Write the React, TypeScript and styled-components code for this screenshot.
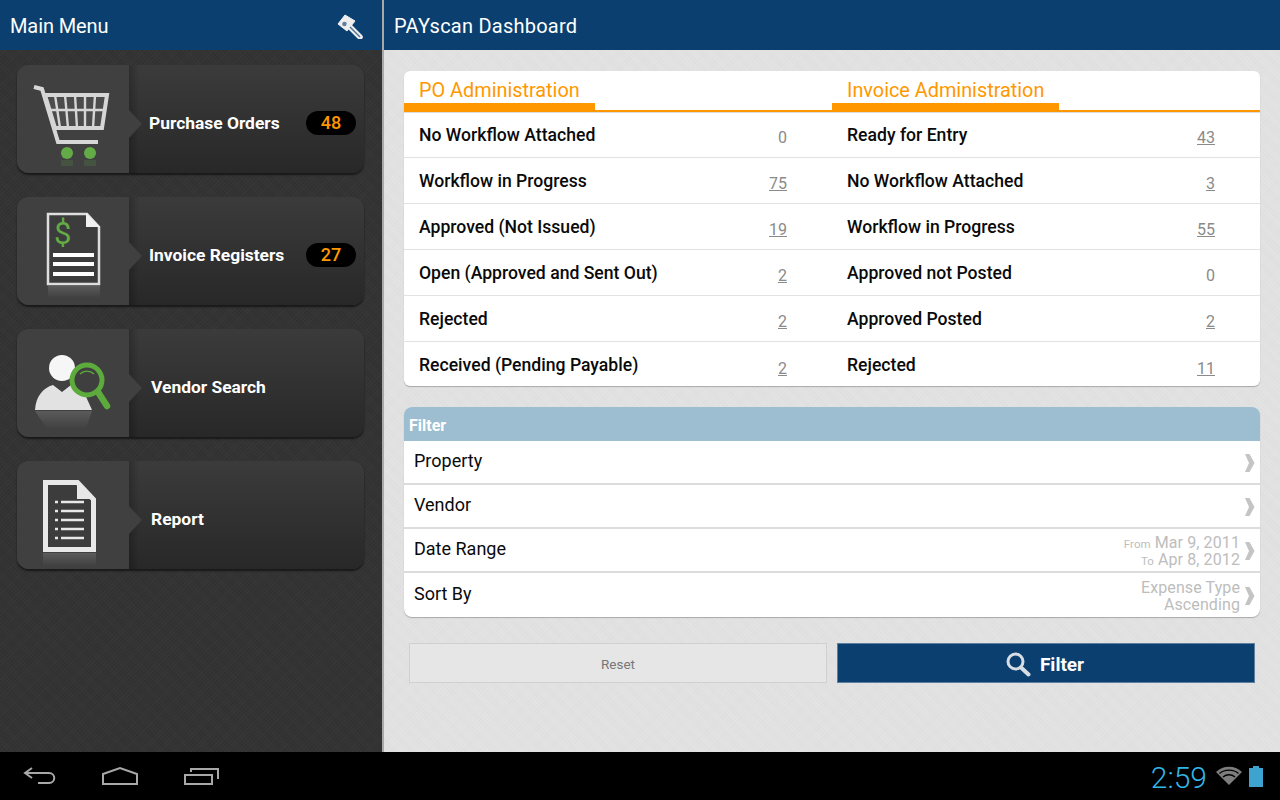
import React, { FC, ReactNode } from 'react';
import styled, { createGlobalStyle } from 'styled-components';

const GlobalStyle = createGlobalStyle`
    html, body {
        margin: 0;
        padding: 0;
        background: #000;
    }
    body {
        font-family: Roboto, "Liberation Sans", sans-serif;
    }
`;

const Screen = styled.div`
    width: 1280px;
    height: 800px;
    overflow: hidden;
    display: flex;
    flex-direction: column;
`;

const Panes = styled.div`
    height: 752px;
    display: flex;
`;

const TopBar = styled.div`
    height: 50px;
    flex: none;
    background: #0b3f70;
    color: #fff;
    font-size: 20px;
    display: flex;
    align-items: center;
    justify-content: space-between;
    box-sizing: border-box;
    padding: 2px 19px 0 10px;
`;

const PageTitle = styled.span<{ $spacing: number }>`
    letter-spacing: ${(props) => props.$spacing}px;
`;

const Sidebar = styled.aside`
    width: 382px;
    flex: none;
    display: flex;
    flex-direction: column;
    background-color: #343434;
    background-image: repeating-linear-gradient(45deg, rgba(0, 0, 0, 0.07) 0 1px, transparent 1px 2px),
        repeating-linear-gradient(-45deg, rgba(255, 255, 255, 0.02) 0 1px, transparent 1px 3px);
`;

const Divider = styled.div`
    width: 2px;
    flex: none;
    background: #a9a9a9;
`;

const Menu = styled.nav`
    display: flex;
    flex-direction: column;
    gap: 24px;
    padding: 15px 18px 0 17px;
`;

const MenuCard = styled.div`
    height: 108px;
    display: flex;
    border-radius: 12px;
    overflow: hidden;
    background: linear-gradient(#3b3b3b, #282828);
    box-shadow: 0 2px 2px rgba(0, 0, 0, 0.55);
`;

const CardIcon = styled.div`
    position: relative;
    width: 112px;
    flex: none;
    display: flex;
    background: #404040;

    &::after {
        content: '';
        position: absolute;
        left: 100%;
        top: 45px;
        border-style: solid;
        border-width: 14px 0 14px 13px;
        border-color: transparent transparent transparent #404040;
    }
`;

const CardBody = styled.div<{ $inset: number }>`
    flex: 1;
    display: flex;
    align-items: center;
    justify-content: space-between;
    padding: 7px 8px 0 ${(props) => props.$inset}px;
    background: linear-gradient(90deg, rgba(0, 0, 0, 0.22), transparent 10px);
`;

const CardLabel = styled.span`
    color: #fff;
    font-size: 17.4px;
    font-weight: 700;
`;

const Badge = styled.span`
    width: 50px;
    height: 24px;
    border-radius: 12px;
    background: #000;
    color: #ff9800;
    font-size: 18px;
    font-weight: 500;
    display: flex;
    align-items: center;
    justify-content: center;
`;

const Main = styled.main`
    flex: 1;
    display: flex;
    flex-direction: column;
    background-color: #e0e0e0;
    background-image: repeating-linear-gradient(45deg, rgba(255, 255, 255, 0.12) 0 1px, transparent 1px 2px),
        repeating-linear-gradient(-45deg, rgba(0, 0, 0, 0.012) 0 1px, transparent 1px 3px);
`;

const Content = styled.div`
    padding: 21px 20px 0;
    display: flex;
    flex-direction: column;
`;

const AdminPanel = styled.section`
    height: 315px;
    display: grid;
    grid-template-columns: 428px 428px;
    background: #fff;
    border-radius: 6px;
    box-shadow: 0 1px 1px rgba(0, 0, 0, 0.25);
    overflow: hidden;
`;

const AdminColumn = styled.div`
    display: flex;
    flex-direction: column;
`;

const AdminHeader = styled.div`
    height: 41px;
    flex: none;
    box-sizing: border-box;
    border-bottom: 2px solid #ff9800;
    box-shadow: 0 1px 0 #ddd;
    display: flex;
    align-items: flex-end;
`;

const AdminTab = styled.h2<{ $width: number }>`
    margin: 0 0 -2px;
    width: ${(props) => props.$width}px;
    height: 41px;
    box-sizing: border-box;
    padding: 8px 0 0 15px;
    border-bottom: 9px solid #ff9800;
    color: #ff9800;
    font-size: 19.85px;
    line-height: 24px;
    font-weight: 400;
`;

const AdminRow = styled.div`
    height: 46px;
    box-sizing: border-box;
    display: flex;
    align-items: center;
    justify-content: space-between;
    padding: 0 45px 0 15px;
    border-bottom: 1px solid #e2e2e2;
    color: #0a0a0a;
    font-size: 17.6px;
    font-weight: 500;

    &:last-child {
        border-bottom: 0;
    }
`;

const Count = styled.span<{ $linked: boolean }>`
    color: #8a8a8a;
    font-size: 16px;
    font-weight: 400;
    padding-top: 6px;
    text-decoration: ${(props) => (props.$linked ? 'underline' : 'none')};
`;

const FilterPanel = styled.section`
    margin-top: 21px;
    border-radius: 8px;
    overflow: hidden;
    background: #fff;
    box-shadow: 0 1px 1px rgba(0, 0, 0, 0.25);
`;

const FilterHeader = styled.div`
    height: 34px;
    box-sizing: border-box;
    padding: 10px 0 0 5px;
    background: #9dbdd0;
    color: #fff;
    font-size: 16px;
    line-height: 18px;
    font-weight: 700;
`;

const FilterRow = styled.div`
    height: 44px;
    box-sizing: border-box;
    display: flex;
    align-items: center;
    padding: 0 5px 4px 10px;
    border-bottom: 2px solid #dcdcdc;
    color: #0a0a0a;
    font-size: 18px;

    &:last-child {
        border-bottom: 0;
    }
`;

const FilterName = styled.span`
    flex: 1;
`;

const FilterValue = styled.div`
    color: #bdbdbd;
    font-size: 16px;
    line-height: 17px;
    text-align: right;
    margin: 6px 5px 0 0;
    letter-spacing: 0.1px;
`;

const SmallPrefix = styled.span`
    font-size: 11.5px;
    line-height: 1;
    margin-right: 4px;
`;

const Chevron = styled.svg`
    width: 10px;
    height: 18px;
    flex: none;
    margin-top: 5px;
`;

const Actions = styled.div`
    margin-top: 26px;
    padding: 0 5px;
    display: grid;
    grid-template-columns: 418px 418px;
    gap: 10px;
`;

const ResetButton = styled.button`
    height: 40px;
    border: 1px solid #d0d0d0;
    background: #e6e6e6;
    color: #777;
    font-family: inherit;
    font-size: 13.5px;
    padding: 2px 0 0;
`;

const FilterButton = styled.button`
    height: 40px;
    border: 1px solid #5c7f9f;
    background: #0b3f70;
    color: #fff;
    font-family: inherit;
    font-size: 19px;
    font-weight: 700;
    padding: 2px 2px 0 0;
    display: flex;
    align-items: center;
    justify-content: center;
    gap: 9px;
`;

const SystemBar = styled.footer`
    height: 48px;
    flex: none;
    background: #000;
    display: flex;
    align-items: center;
    justify-content: space-between;
    padding: 0 17px 0 23px;
`;

const NavIcons = styled.div`
    display: flex;
    align-items: center;
    gap: 45px;
`;

const StatusArea = styled.div`
    display: flex;
    align-items: center;
    gap: 7px;
`;

const Clock = styled.span`
    color: #33b5e5;
    font-size: 30px;
    font-weight: 300;
    margin: 2px 2px 0 0;
`;

const IconFrame: FC<{ id: string; children: ReactNode }> = ({ id, children }) => (
    <svg width="112" height="108" viewBox="0 0 112 108">
        <defs>
            <linearGradient id={id} x1="0" y1="0" x2="0" y2="1">
                <stop offset="0" stopColor="#fff" stopOpacity="0.14" />
                <stop offset="1" stopColor="#fff" stopOpacity="0" />
            </linearGradient>
        </defs>
        {children}
    </svg>
);

const CartIcon = () => (
    <IconFrame id="cart-fade">
        <path d="M17 22l8 2 16 53h40" fill="none" stroke="#d6d6d6" strokeWidth="4" />
        <path d="M28 30h62l-5 33H38z" fill="#4c4c4c" stroke="#d6d6d6" strokeWidth="4" />
        <path d="M31 45h57M38 30l5 33M48 30l3 33M58 30l2 33M68 30v33M78 30l-2 33" stroke="#d6d6d6" strokeWidth="2.4" />
        <circle cx="50" cy="88" r="6" fill="#62ab46" />
        <circle cx="73" cy="88" r="6" fill="#62ab46" />
        <rect x="44" y="95" width="12" height="6" fill="#62ab46" opacity="0.18" />
        <rect x="67" y="95" width="12" height="6" fill="#62ab46" opacity="0.18" />
    </IconFrame>
);

const InvoiceIcon = () => (
    <IconFrame id="invoice-fade">
        <path d="M31 17h39l12 13v57H31z" fill="#3c3c3c" stroke="#dedede" strokeWidth="2.5" />
        <path d="M69 16v14h14z" fill="#f0f0f0" />
        <text x="37" y="47" fill="#62ab46" fontFamily="Roboto" fontSize="31">$</text>
        <path d="M36 58h41M36 67h41M36 77h41" stroke="#fff" strokeWidth="4" />
        <rect x="31" y="89" width="52" height="12" fill="url(#invoice-fade)" />
    </IconFrame>
);

const VendorIcon = () => (
    <IconFrame id="vendor-fade">
        <circle cx="45" cy="39" r="13" fill="#f6f6f6" />
        <path d="M18 81c1-14 8-22 18-25l9 7 9-7 12 5 9 20z" fill="#e2e2e2" />
        <circle cx="70" cy="51" r="15" fill="#3f3f3f" stroke="#5cab3c" strokeWidth="5" />
        <path d="M81 63l9 14" stroke="#5cab3c" strokeWidth="6.5" strokeLinecap="round" />
        <path d="M63 45a10 10 0 0 1 14 0" fill="none" stroke="#5cab3c" strokeWidth="1.4" />
        <path d="M18 82h57l-6 18H30z" fill="url(#vendor-fade)" />
    </IconFrame>
);

const ReportIcon = () => (
    <IconFrame id="report-fade">
        <path d="M28.500 21.500h32l16 17v50h-48z" fill="#3c3c3c" stroke="#e8e8e8" strokeWidth="5" />
        <path d="M60 20v18h18z" fill="#e8e8e8" />
        <path d="M38 41h3M44 41h23M38 50h3M44 50h23M38 59h3M44 59h23M38 68h3M44 68h23M38 77h3M44 77h23" stroke="#e8e8e8" strokeWidth="2.4" />
        <rect x="26" y="92" width="53" height="13" fill="url(#report-fade)" />
    </IconFrame>
);

const ToolIcon = () => (
    <svg width="26" height="26" viewBox="0 0 26 26">
        <path d="M1 11L8 2l10 6-8 10z" fill="#eee" strokeLinejoin="round" stroke="#eee" />
        <circle cx="7.500" cy="11" r="2.300" fill="#5f7f9e" />
        <path d="M12 13l11 11" stroke="#eee" strokeWidth="5.500" strokeLinecap="round" />
        <path d="M13 14l10 10" stroke="#4f7498" strokeWidth="1.400" />
    </svg>
);

const SearchIcon = () => (
    <svg width="25" height="25" viewBox="0 0 25 25">
        <circle cx="9.500" cy="9.500" r="7.500" fill="none" stroke="#d6dde4" strokeWidth="3" />
        <path d="M15 15.500l7.500 7" stroke="#d6dde4" strokeWidth="4" strokeLinecap="round" />
    </svg>
);

const RowChevron = () => (
    <Chevron viewBox="0 0 10 18">
        <path d="M0 0h4.500l5 9-5 9H0l4-9z" fill="#c4c4c4" />
    </Chevron>
);

type MenuItem = {
    label: string;
    icon: ReactNode;
    count?: number;
    inset: number;
};

const menuItems: MenuItem[] = [
    { label: 'Purchase Orders', icon: <CartIcon />, count: 48, inset: 20 },
    { label: 'Invoice Registers', icon: <InvoiceIcon />, count: 27, inset: 20 },
    { label: 'Vendor Search', icon: <VendorIcon />, inset: 22 },
    { label: 'Report', icon: <ReportIcon />, inset: 22 },
];

type AdminEntry = [string, number, boolean];

const poRows: AdminEntry[] = [
    ['No Workflow Attached', 0, false],
    ['Workflow in Progress', 75, true],
    ['Approved (Not Issued)', 19, true],
    ['Open (Approved and Sent Out)', 2, true],
    ['Rejected', 2, true],
    ['Received (Pending Payable)', 2, true],
];

const invoiceRows: AdminEntry[] = [
    ['Ready for Entry', 43, true],
    ['No Workflow Attached', 3, true],
    ['Workflow in Progress', 55, true],
    ['Approved not Posted', 0, false],
    ['Approved Posted', 2, true],
    ['Rejected', 11, true],
];

const AdminBlock: FC<{ title: string; tabWidth: number; rows: AdminEntry[] }> = ({ title, tabWidth, rows }) => (
    <AdminColumn>
        <AdminHeader>
            <AdminTab $width={tabWidth}>{title}</AdminTab>
        </AdminHeader>
        <div>
            {rows.map(([name, count, linked]) => (
                <AdminRow key={name}>
                    <span>{name}</span>
                    <Count $linked={linked}>{count}</Count>
                </AdminRow>
            ))}
        </div>
    </AdminColumn>
);

const App: FC = () => {
    return (
        <Screen>
            <GlobalStyle />
            <Panes>
                <Sidebar>
                    <TopBar>
                        <PageTitle $spacing={-0.1}>Main Menu</PageTitle>
                        <ToolIcon />
                    </TopBar>
                    <Menu>
                        {menuItems.map((item) => (
                            <MenuCard key={item.label}>
                                <CardIcon>{item.icon}</CardIcon>
                                <CardBody $inset={item.inset}>
                                    <CardLabel>{item.label}</CardLabel>
                                    {item.count !== undefined && <Badge>{item.count}</Badge>}
                                </CardBody>
                            </MenuCard>
                        ))}
                    </Menu>
                </Sidebar>
                <Divider />
                <Main>
                    <TopBar>
                        <PageTitle $spacing={0.24}>PAYscan Dashboard</PageTitle>
                    </TopBar>
                    <Content>
                        <AdminPanel>
                            <AdminBlock title="PO Administration" tabWidth={191} rows={poRows} />
                            <AdminBlock title="Invoice Administration" tabWidth={227} rows={invoiceRows} />
                        </AdminPanel>
                        <FilterPanel>
                            <FilterHeader>Filter</FilterHeader>
                            <FilterRow>
                                <FilterName>Property</FilterName>
                                <RowChevron />
                            </FilterRow>
                            <FilterRow>
                                <FilterName>Vendor</FilterName>
                                <RowChevron />
                            </FilterRow>
                            <FilterRow>
                                <FilterName>Date Range</FilterName>
                                <FilterValue>
                                    <div>
                                        <SmallPrefix>From</SmallPrefix>Mar 9, 2011
                                    </div>
                                    <div>
                                        <SmallPrefix>To</SmallPrefix>Apr 8, 2012
                                    </div>
                                </FilterValue>
                                <RowChevron />
                            </FilterRow>
                            <FilterRow>
                                <FilterName>Sort By</FilterName>
                                <FilterValue>
                                    <div>Expense Type</div>
                                    <div>Ascending</div>
                                </FilterValue>
                                <RowChevron />
                            </FilterRow>
                        </FilterPanel>
                        <Actions>
                            <ResetButton>Reset</ResetButton>
                            <FilterButton>
                                <SearchIcon />
                                Filter
                            </FilterButton>
                        </Actions>
                    </Content>
                </Main>
            </Panes>
            <SystemBar>
                <NavIcons>
                    <svg width="33" height="18" viewBox="0 0 33 18">
                        <path d="M9 1L2 6l7 5M2 6h24c7 0 7 10 0 10H15" fill="none" stroke="#a8a8a8" strokeWidth="2" />
                    </svg>
                    <svg width="38" height="20" viewBox="0 0 38 20">
                        <path d="M2 8l17-6 17 6v10H2z" fill="none" stroke="#a8a8a8" strokeWidth="2" />
                    </svg>
                    <svg width="35" height="18" viewBox="0 0 35 18">
                        <path d="M1 8h27v9H1z" fill="none" stroke="#a8a8a8" strokeWidth="2" />
                        <path d="M7 5V2h27v10" fill="none" stroke="#a8a8a8" strokeWidth="2" />
                    </svg>
                </NavIcons>
                <StatusArea>
                    <Clock>2:59</Clock>
                    <svg width="26" height="20" viewBox="0 0 26 20">
                        <path d="M13 19L0 6c7-7 19-7 26 0z" fill="#7d7d7d" />
                        <path d="M3.500 7.500c5-4.500 14-4.500 19 0M7 11c3.500-3 8.500-3 12 0" fill="none" stroke="#000" strokeWidth="1.300" />
                    </svg>
                    <svg width="14" height="21" viewBox="0 0 14 21">
                        <path d="M4 0h6v2h4v19H0V2h4z" fill="#3fa3cf" />
                    </svg>
                </StatusArea>
            </SystemBar>
        </Screen>
    );
};

export default App;
